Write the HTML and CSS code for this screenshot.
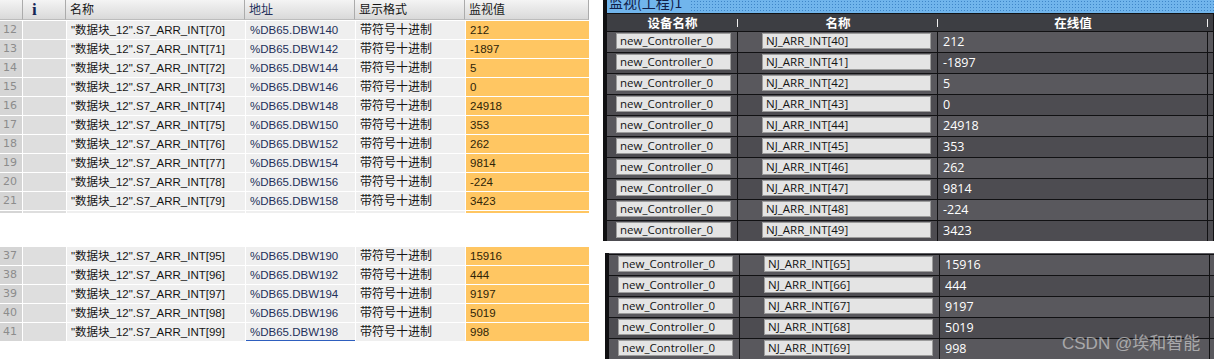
FILE: index.html
```html
<!DOCTYPE html>
<html lang="zh-CN">
<head>
    <meta charset="UTF-8">
    <title>监视表</title>
    <link rel="stylesheet" href="styles.css">
</head>
<body>
<div class="page">

    <!-- 左侧: 监控表 -->
    <div class="watch">
        <div class="wrow whead">
            <div class="c-no"></div>
            <div class="c-ico"><span class="info-i">i</span></div>
            <div class="c-name">名称</div>
            <div class="c-addr">地址</div>
            <div class="c-fmt">显示格式</div>
            <div class="c-val">监视值</div>
        </div>

        <div class="wrow"><div class="c-no">12</div><div class="c-ico"></div><div class="c-name">"数据块_12".S7_ARR_INT[70]</div><div class="c-addr">%DB65.DBW140</div><div class="c-fmt">带符号十进制</div><div class="c-val">212</div></div>
        <div class="wrow"><div class="c-no">13</div><div class="c-ico"></div><div class="c-name">"数据块_12".S7_ARR_INT[71]</div><div class="c-addr">%DB65.DBW142</div><div class="c-fmt">带符号十进制</div><div class="c-val">-1897</div></div>
        <div class="wrow"><div class="c-no">14</div><div class="c-ico"></div><div class="c-name">"数据块_12".S7_ARR_INT[72]</div><div class="c-addr">%DB65.DBW144</div><div class="c-fmt">带符号十进制</div><div class="c-val">5</div></div>
        <div class="wrow"><div class="c-no">15</div><div class="c-ico"></div><div class="c-name">"数据块_12".S7_ARR_INT[73]</div><div class="c-addr">%DB65.DBW146</div><div class="c-fmt">带符号十进制</div><div class="c-val">0</div></div>
        <div class="wrow"><div class="c-no">16</div><div class="c-ico"></div><div class="c-name">"数据块_12".S7_ARR_INT[74]</div><div class="c-addr">%DB65.DBW148</div><div class="c-fmt">带符号十进制</div><div class="c-val">24918</div></div>
        <div class="wrow"><div class="c-no">17</div><div class="c-ico"></div><div class="c-name">"数据块_12".S7_ARR_INT[75]</div><div class="c-addr">%DB65.DBW150</div><div class="c-fmt">带符号十进制</div><div class="c-val">353</div></div>
        <div class="wrow"><div class="c-no">18</div><div class="c-ico"></div><div class="c-name">"数据块_12".S7_ARR_INT[76]</div><div class="c-addr">%DB65.DBW152</div><div class="c-fmt">带符号十进制</div><div class="c-val">262</div></div>
        <div class="wrow"><div class="c-no">19</div><div class="c-ico"></div><div class="c-name">"数据块_12".S7_ARR_INT[77]</div><div class="c-addr">%DB65.DBW154</div><div class="c-fmt">带符号十进制</div><div class="c-val">9814</div></div>
        <div class="wrow"><div class="c-no">20</div><div class="c-ico"></div><div class="c-name">"数据块_12".S7_ARR_INT[78]</div><div class="c-addr">%DB65.DBW156</div><div class="c-fmt">带符号十进制</div><div class="c-val">-224</div></div>
        <div class="wrow"><div class="c-no">21</div><div class="c-ico"></div><div class="c-name">"数据块_12".S7_ARR_INT[79]</div><div class="c-addr">%DB65.DBW158</div><div class="c-fmt">带符号十进制</div><div class="c-val">3423</div></div>
        <div class="wrow stub"><div class="c-no"></div><div class="c-ico"></div><div class="c-name"></div><div class="c-addr"></div><div class="c-fmt"></div><div class="c-val"></div></div>

        <div class="wgap"></div>

        <div class="wrow"><div class="c-no">37</div><div class="c-ico"></div><div class="c-name">"数据块_12".S7_ARR_INT[95]</div><div class="c-addr">%DB65.DBW190</div><div class="c-fmt">带符号十进制</div><div class="c-val">15916</div></div>
        <div class="wrow"><div class="c-no">38</div><div class="c-ico"></div><div class="c-name">"数据块_12".S7_ARR_INT[96]</div><div class="c-addr">%DB65.DBW192</div><div class="c-fmt">带符号十进制</div><div class="c-val">444</div></div>
        <div class="wrow"><div class="c-no">39</div><div class="c-ico"></div><div class="c-name">"数据块_12".S7_ARR_INT[97]</div><div class="c-addr">%DB65.DBW194</div><div class="c-fmt">带符号十进制</div><div class="c-val">9197</div></div>
        <div class="wrow"><div class="c-no">40</div><div class="c-ico"></div><div class="c-name">"数据块_12".S7_ARR_INT[98]</div><div class="c-addr">%DB65.DBW196</div><div class="c-fmt">带符号十进制</div><div class="c-val">5019</div></div>
        <div class="wrow"><div class="c-no">41</div><div class="c-ico"></div><div class="c-name">"数据块_12".S7_ARR_INT[99]</div><div class="c-addr selected">%DB65.DBW198</div><div class="c-fmt">带符号十进制</div><div class="c-val">998</div></div>
    </div>

    <!-- 右侧: 监视(工程)1 -->
    <div class="monitor">
        <div class="mblock">
            <div class="mtitle"><span class="mtitle-text">监视(工程)1</span><span class="mtitle-dots"></span></div>
            <div class="mrow mhead">
                <div class="m-dev">设备名称</div>
                <div class="m-name">名称</div>
                <div class="m-val">在线值</div>
                <div class="m-end"></div>
            </div>
            <div class="mrow"><div class="m-dev"><span class="box">new_Controller_0</span></div><div class="m-name"><span class="box">NJ_ARR_INT[40]</span></div><div class="m-val">212</div><div class="m-end"></div></div>
            <div class="mrow alt"><div class="m-dev"><span class="box">new_Controller_0</span></div><div class="m-name"><span class="box">NJ_ARR_INT[41]</span></div><div class="m-val">-1897</div><div class="m-end"></div></div>
            <div class="mrow"><div class="m-dev"><span class="box">new_Controller_0</span></div><div class="m-name"><span class="box">NJ_ARR_INT[42]</span></div><div class="m-val">5</div><div class="m-end"></div></div>
            <div class="mrow alt"><div class="m-dev"><span class="box">new_Controller_0</span></div><div class="m-name"><span class="box">NJ_ARR_INT[43]</span></div><div class="m-val">0</div><div class="m-end"></div></div>
            <div class="mrow"><div class="m-dev"><span class="box">new_Controller_0</span></div><div class="m-name"><span class="box">NJ_ARR_INT[44]</span></div><div class="m-val">24918</div><div class="m-end"></div></div>
            <div class="mrow alt"><div class="m-dev"><span class="box">new_Controller_0</span></div><div class="m-name"><span class="box">NJ_ARR_INT[45]</span></div><div class="m-val">353</div><div class="m-end"></div></div>
            <div class="mrow"><div class="m-dev"><span class="box">new_Controller_0</span></div><div class="m-name"><span class="box">NJ_ARR_INT[46]</span></div><div class="m-val">262</div><div class="m-end"></div></div>
            <div class="mrow alt"><div class="m-dev"><span class="box">new_Controller_0</span></div><div class="m-name"><span class="box">NJ_ARR_INT[47]</span></div><div class="m-val">9814</div><div class="m-end"></div></div>
            <div class="mrow"><div class="m-dev"><span class="box">new_Controller_0</span></div><div class="m-name"><span class="box">NJ_ARR_INT[48]</span></div><div class="m-val">-224</div><div class="m-end"></div></div>
            <div class="mrow alt"><div class="m-dev"><span class="box">new_Controller_0</span></div><div class="m-name"><span class="box">NJ_ARR_INT[49]</span></div><div class="m-val">3423</div><div class="m-end"></div></div>
        </div>

        <div class="mblock second">
            <div class="mstub"></div>
            <div class="mrow"><div class="m-dev"><span class="box">new_Controller_0</span></div><div class="m-name"><span class="box">NJ_ARR_INT[65]</span></div><div class="m-val">15916</div><div class="m-end"></div></div>
            <div class="mrow alt"><div class="m-dev"><span class="box">new_Controller_0</span></div><div class="m-name"><span class="box">NJ_ARR_INT[66]</span></div><div class="m-val">444</div><div class="m-end"></div></div>
            <div class="mrow"><div class="m-dev"><span class="box">new_Controller_0</span></div><div class="m-name"><span class="box">NJ_ARR_INT[67]</span></div><div class="m-val">9197</div><div class="m-end"></div></div>
            <div class="mrow alt"><div class="m-dev"><span class="box">new_Controller_0</span></div><div class="m-name"><span class="box">NJ_ARR_INT[68]</span></div><div class="m-val">5019</div><div class="m-end"></div></div>
            <div class="mrow"><div class="m-dev"><span class="box">new_Controller_0</span></div><div class="m-name"><span class="box">NJ_ARR_INT[69]</span></div><div class="m-val">998</div><div class="m-end"></div></div>
        </div>

        <div class="watermark">CSDN @埃和智能</div>
    </div>

</div>
</body>
</html>
```

FILE: styles.css
```css
body {
    margin: 0;
    background: #ffffff;
    font-family: "Liberation Sans", "Noto Sans CJK SC", sans-serif;
    overflow: hidden;
}

.page {
    display: flex;
    align-items: flex-start;
    height: 360px;
}

/* left watch table */
.watch {
    width: 589px;
    display: flex;
    flex-direction: column;
    row-gap: 1px;
    background: #ffffff;
}

.wrow {
    display: grid;
    grid-template-columns: 22px 43px 178px 109px 109px 123px;
    column-gap: 1px;
    height: 18px;
    font-size: 11.5px;
    line-height: 18px;
}

.wrow > div {
    background: #efefef;
    padding-left: 4px;
    white-space: nowrap;
    overflow: hidden;
}

.wrow .c-no {
    background: #d5d5d5;
    color: #8c8c8c;
    font-family: "DejaVu Sans", sans-serif;
    font-size: 11px;
    padding-left: 3px;
}

.wrow .c-ico {
    background: #dedede;
}

.wrow .c-name {
    color: #151515;
}

.wrow .c-addr {
    color: #24305a;
}

.wrow .c-fmt {
    color: #151515;
    font-size: 12px;
}

.wrow .c-val {
    background: #ffc662;
    color: #2e2408;
}

.wrow .selected {
    box-shadow: inset 0 -1px 0 #2e5fbf;
}

.whead {
    height: 20px;
    line-height: 20px;
    font-size: 12px;
    column-gap: 0;
    grid-template-columns: 23px 43px 179px 110px 110px 124px;
    border-top: 1px solid #a9a9a9;
    margin-top: -1px;
}

.whead > div {
    background: linear-gradient(#f4f4f4, #d9d9d9);
    border-right: 1px solid #ababab;
    border-bottom: 1px solid #bcbcbc;
    color: #1a1a1a;
}

.whead .c-no,
.whead .c-ico,
.whead .c-val {
    background: linear-gradient(#f4f4f4, #d9d9d9);
}

.whead .c-val {
    color: #1a1a1a;
}

.info-i {
    font-family: "Liberation Serif", serif;
    font-weight: bold;
    font-size: 17px;
    color: #142656;
    padding-left: 5px;
}

.stub {
    height: 2px;
}

.wgap {
    height: 32px;
    background: #ffffff;
}

/* right monitor panel */
.monitor {
    position: relative;
    margin-left: 14px;
    width: 611px;
    font-family: "Open Sans", "Noto Sans CJK SC", sans-serif;
    font-size: 11.5px;
}

.mblock {
    background: #111113;
    border-left: 4px solid #101012;
    display: flex;
    flex-direction: column;
    row-gap: 1px;
}

.mblock.second {
    margin-top: 12px;
    margin-left: 2px;
}

.mtitle {
    display: flex;
    height: 13px;
    background: #71b5ec;
    overflow: hidden;
    margin-bottom: 0;
}

.mtitle-text {
    font-family: "Noto Sans CJK SC", sans-serif;
    font-size: 14px;
    line-height: 14px;
    margin-top: -5px;
    padding-left: 2px;
    color: #10204a;
}

.mtitle-dots {
    flex: 1;
    margin-left: 8px;
    background-image: radial-gradient(circle, #3f86c8 0.7px, transparent 1px);
    background-size: 3px 3px;
}

.mrow {
    display: grid;
    grid-template-columns: 130px 199px 269px 5px;
    column-gap: 1px;
    height: 20px;
    line-height: 20px;
}

.mrow > div {
    background: #59585d;
    color: #ffffff;
    white-space: nowrap;
    overflow: hidden;
}

.mrow.alt > div {
    background: #4d4c51;
}

.mhead {
    height: 17px;
    line-height: 17px;
    column-gap: 0;
    grid-template-columns: 131px 200px 270px 5px;
}

.mhead > div {
    background: #3d3e43;
    text-align: center;
    font-family: "Noto Sans CJK SC", sans-serif;
    font-size: 12.5px;
    font-weight: bold;
    position: relative;
}

.mhead .m-dev::after,
.mhead .m-name::after,
.mhead .m-val::after {
    content: "";
    position: absolute;
    right: 0;
    top: 5px;
    width: 1px;
    height: 8px;
    background: #f0f0f0;
}

.m-dev {
    padding-left: 9px;
}

.m-name {
    padding-left: 24px;
}

.m-val {
    padding-left: 5px;
    font-size: 12.5px;
}

.mhead .m-dev,
.mhead .m-name,
.mhead .m-val {
    padding-left: 0;
}

.box {
    display: block;
    height: 14px;
    margin-top: 1px;
    line-height: 14px;
    background: #e4e4e4;
    border: 1px solid #9c9c9c;
    color: #141414;
    padding-left: 3px;
}

.m-dev .box {
    width: 110px;
}

.m-name .box {
    width: 164px;
}

.mstub {
    height: 1px;
    background: #5c5b60;
}

.watermark {
    position: absolute;
    left: 459px;
    top: 329px;
    font-family: "Liberation Sans", "Noto Sans CJK SC", sans-serif;
    font-size: 17px;
    color: rgba(225, 225, 225, 0.6);
    white-space: nowrap;
}
```
